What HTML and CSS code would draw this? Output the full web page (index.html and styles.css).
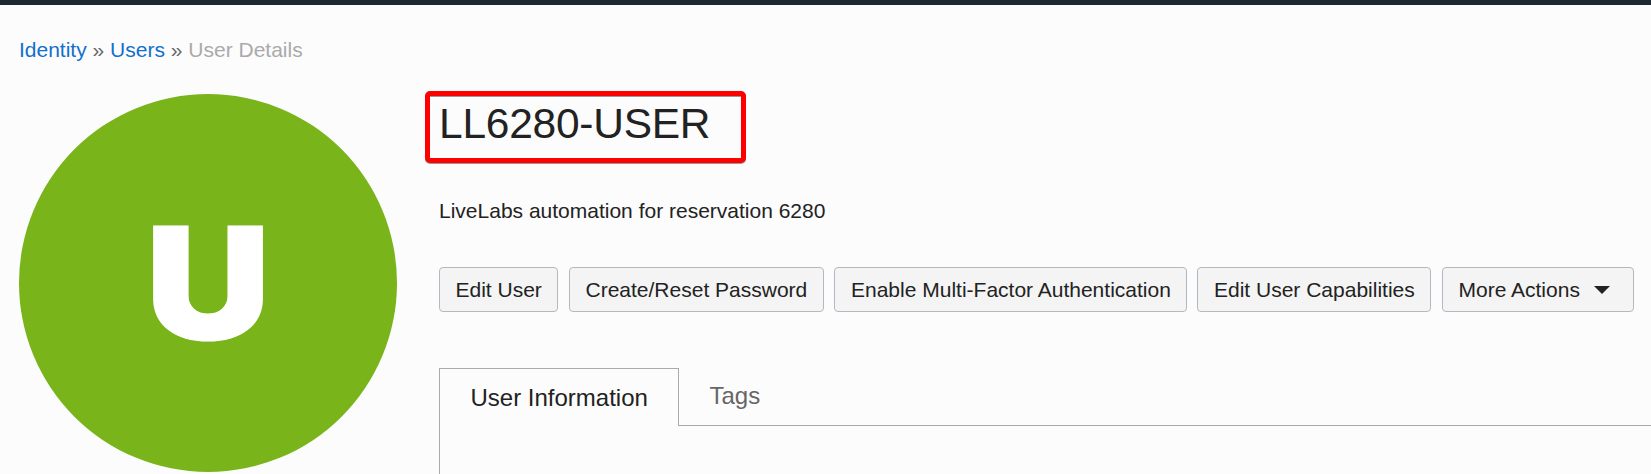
FILE: index.html
```html
<!DOCTYPE html>
<html lang="en">
<head>
<meta charset="utf-8">
<title>User Details</title>
<link rel="stylesheet" href="styles.css">
</head>
<body>
<header class="topbar"></header>
<nav class="breadcrumb"><a class="crumb" href="#">Identity</a><span class="sep">»</span><a class="crumb" href="#">Users</a><span class="sep">»</span><span class="current">User Details</span></nav>
<main class="layout">
  <div class="avatar"><span class="letter">U</span></div>
  <section class="details">
    <h1 class="title">LL6280-USER<span class="highlight"></span></h1>
    <p class="description">LiveLabs automation for reservation 6280</p>
    <div class="actions">
      <button class="btn w-edit">Edit User</button>
      <button class="btn w-password">Create/Reset Password</button>
      <button class="btn w-mfa">Enable Multi-Factor Authentication</button>
      <button class="btn w-caps">Edit User Capabilities</button>
      <button class="btn w-more">More Actions<svg class="caret" width="16" height="8" viewBox="0 0 16 8"><path d="M0 0H16L8 8Z" fill="#222"/></svg></button>
    </div>
    <div class="tabs">
      <div class="tab active">User Information</div>
      <div class="tab idle">Tags</div>
    </div>
    <div class="panel"></div>
  </section>
</main>
</body>
</html>
```

FILE: styles.css
```css
* { box-sizing: border-box; }
body {
  margin: 0;
  height: 474px;
  overflow: hidden;
  background: #fcfcfc;
  color: #222;
  font-family: "Liberation Sans", Arial, sans-serif;
  font-size: 21px;
}
.topbar { height: 5px; background: #1e2833; }
.breadcrumb {
  display: flex;
  height: 89px;
  padding: 33px 0 0 19px;
  line-height: 24px;
}
.crumb { color: #116fce; text-decoration: none; }
.sep { width: 23.4px; text-align: center; color: #666; }
.current { color: #aaa; }
.layout { display: flex; height: 380px; }
.avatar {
  display: flex;
  align-items: center;
  justify-content: center;
  flex: none;
  width: 378px;
  height: 378px;
  margin: 0 42px 0 19px;
  border-radius: 50%;
  background: #78b41a;
}
.letter {
  color: #fff;
  font: 900 157px/180px Inter, sans-serif;
  -webkit-text-stroke: 1.2px #fff;
  transform: translateX(0.4px) scaleX(1.1);
}
.details { flex: 1; min-width: 0; }
.title {
  position: relative;
  margin: 0;
  padding-top: 5px;
  height: 105px;
  font-size: 42.5px;
  font-weight: 400;
  letter-spacing: -0.25px;
  line-height: 50px;
}
.highlight {
  position: absolute;
  left: -14px;
  top: -3px;
  width: 321px;
  height: 72px;
  border: 5px solid #f00;
  border-radius: 5px;
  filter: drop-shadow(0 1px 0 #999);
}
.description { margin: 0; height: 68px; line-height: 24px; }
.actions { display: flex; height: 101px; }
.btn {
  display: flex;
  align-items: center;
  flex: none;
  height: 45px;
  margin: 0 11px 0 0;
  padding: 0 0 0 15.5px;
  border: 1px solid #b3b8c1;
  border-radius: 4px;
  background: #f4f4f4;
  color: #222;
  font: inherit;
  white-space: nowrap;
}
.w-edit { width: 119px; }
.w-password { width: 255px; margin-right: 10px; }
.w-mfa { width: 353px; margin-right: 10px; padding-left: 16px; }
.w-caps { width: 234px; padding-left: 16px; }
.w-more { width: 192px; margin-right: 0; }
.caret { margin-left: 14px; }
.tabs { display: flex; height: 58px; font-size: 24px; }
.tab { line-height: 58px; white-space: nowrap; }
.active {
  width: 240px;
  padding-left: 30.5px;
  border: 1px solid #aaa;
  border-bottom: 0;
}
.idle {
  flex: 1;
  padding-left: 30.5px;
  border-bottom: 1px solid #aaa;
  color: #666;
  line-height: 56px;
}
.panel { height: 60px; border-left: 1px solid #aaa; }
```
